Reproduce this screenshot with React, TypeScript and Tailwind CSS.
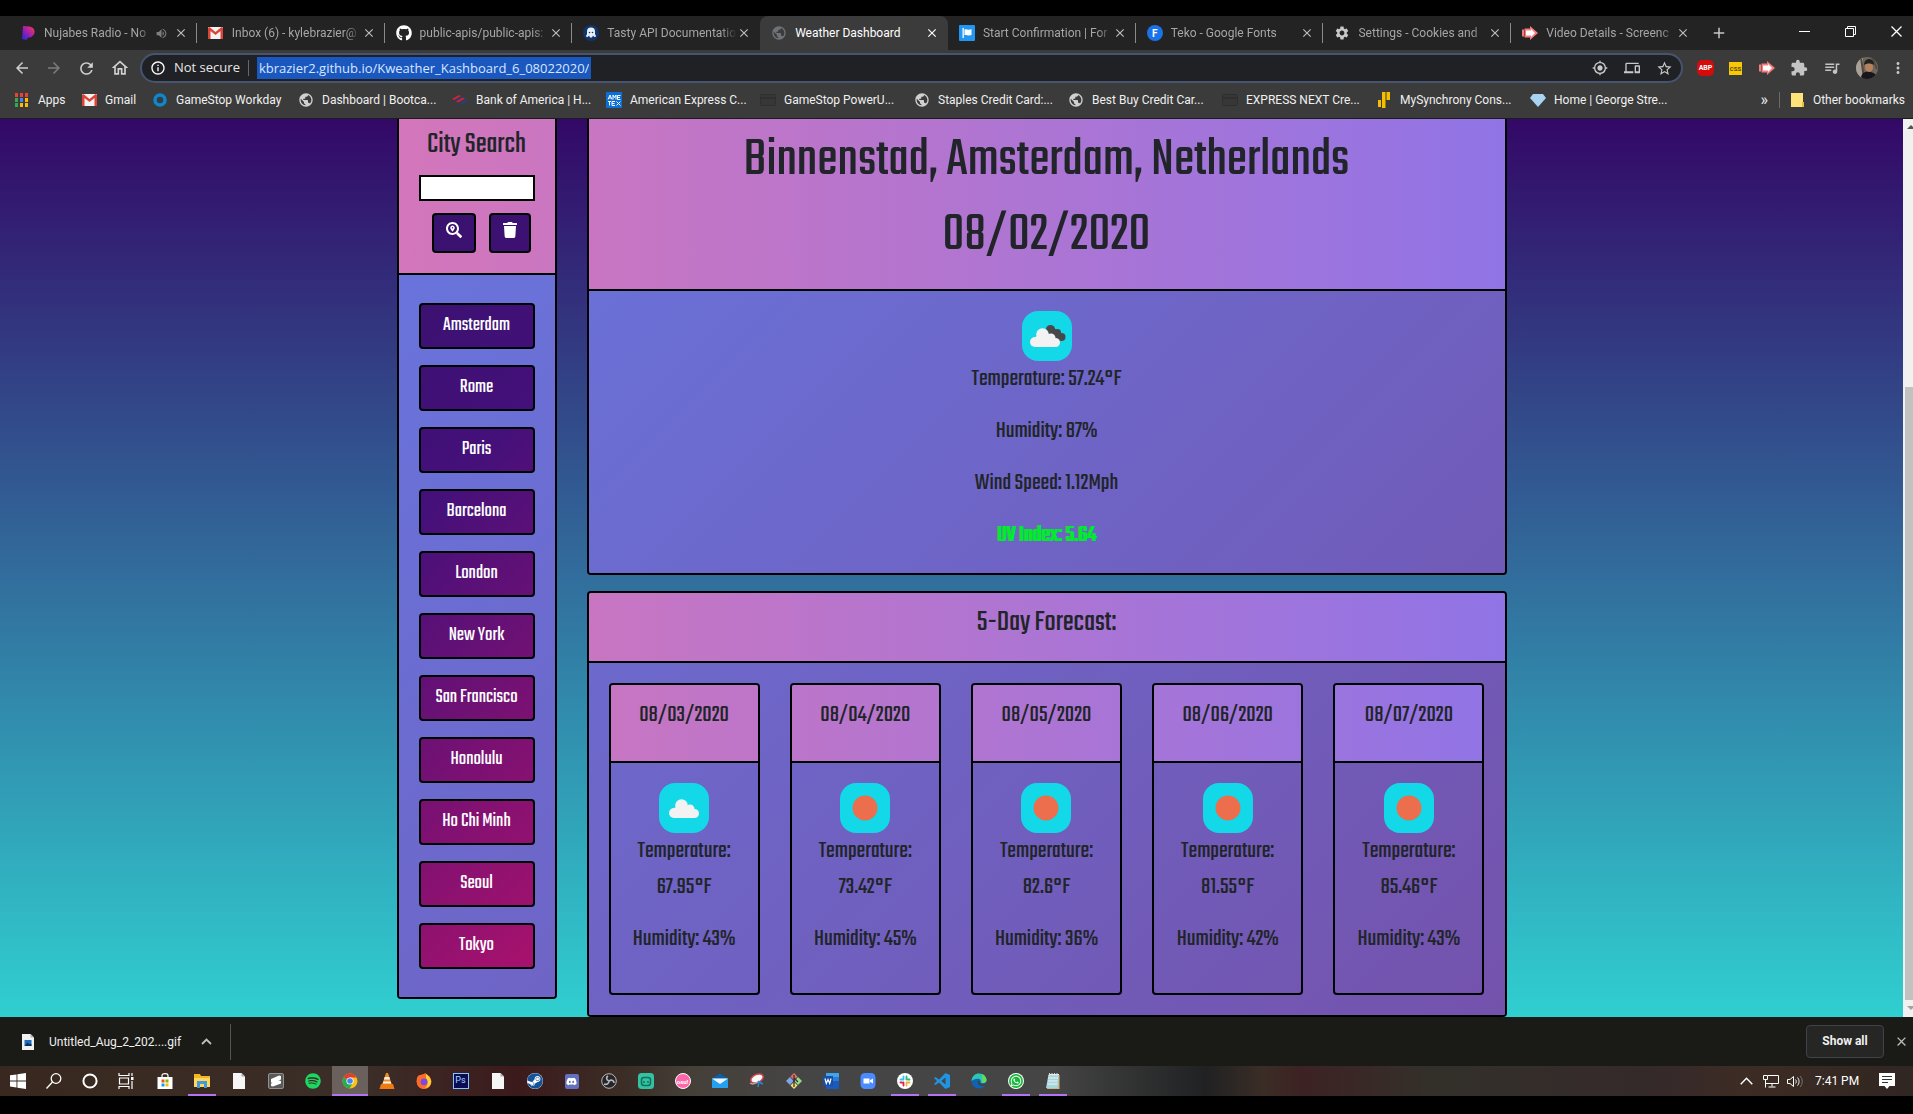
import type { ReactNode } from 'react';
import { FaGithub, FaSearchLocation, FaTrash, FaSpotify, FaSteam, FaDiscord, FaWhatsapp } from 'react-icons/fa';
import {
  MdArrowBack,
  MdArrowForward,
  MdRefresh,
  MdOutlineHome,
  MdInfoOutline,
  MdMyLocation,
  MdDevices,
  MdStarBorder,
  MdExtension,
  MdQueueMusic,
  MdMoreVert,
  MdPublic,
  MdSettings,
  MdClose,
  MdAdd,
  MdVolumeUp,
} from 'react-icons/md';

const UI = 'font-["Segoe_UI","Roboto","Open_Sans",sans-serif]';
const ADDRESS = 'font-["Segoe_UI","Open_Sans",sans-serif]';
const TEKO = 'font-["Teko","Roboto_Condensed","Liberation_Sans",sans-serif]';

/* Gradients that stay fixed to the viewport, so that every panel shows its own part of one backdrop. */
const HEAD_BG =
  'bg-[linear-gradient(90deg,#ec77ab,#7873f5)] bg-fixed bg-[position:0_119px] bg-[length:calc(100%-10px)_898px]';
const BODY_BG =
  'bg-[linear-gradient(135deg,#667eea,#764ba2)] bg-fixed bg-[position:0_119px] bg-[length:calc(100%-10px)_898px]';
const BUTTON_BG =
  'bg-[linear-gradient(135deg,#231557_0%,#44107a_29%,#ff1361_67%,#fff800_100%)] bg-fixed bg-[position:0_119px] bg-[length:calc(100%-10px)_898px]';

/* ---------- favicons ---------- */

const Pandora = () => (
  <svg width="14" height="16" viewBox="0 0 14 16">
    <defs>
      <linearGradient id="pan" x1="0" y1="1" x2="1" y2="0">
        <stop offset="0" stopColor="#1a2bd8" />
        <stop offset=".5" stopColor="#a31fb0" />
        <stop offset="1" stopColor="#ff3a4e" />
      </linearGradient>
    </defs>
    <path d="M2 1l6 .5c4 .5 6 3 5.500 6S10 13 7 12.500L5.500 15 1 14z" fill="url(#pan)" />
  </svg>
);

const GmailIcon = () => (
  <svg width="15" height="12" viewBox="0 0 15 12">
    <rect width="15" height="12" rx="1" fill="#f2f2f2" />
    <path d="M0 1v11h2.500V4l5 4 5-4v8H15V1L13.500 0l-6 5-6-5z" fill="#db4437" />
  </svg>
);

const Octo = () => (
  <svg width="16" height="16" viewBox="0 0 16 16">
    <circle cx="8" cy="8" r="8" fill="#12346b" />
    <path d="M4 9V6.500a4 4 0 0 1 8 0V9l1.200 2.500-2 .5-1.200-1.500L9 12.500H7L6 10.500 4.800 12l-2-.5z" fill="#e8f0fa" />
    <circle cx="6.500" cy="7.500" r=".8" fill="#12346b" />
    <circle cx="9.500" cy="7.500" r=".8" fill="#12346b" />
  </svg>
);

const FlagIcon = () => (
  <svg width="16" height="16" viewBox="0 0 16 16">
    <rect width="16" height="16" rx="1" fill="#2196f3" />
    <path d="M3.500 3h1.300v10H3.500zM5.500 4.500c2-1 3 1 7-.3V10c-4 1.300-5-.8-7 .2z" fill="#fff" />
  </svg>
);

const TekoIcon = () => (
  <span className="flex size-4 items-center justify-center rounded-full bg-[#1a73e8] text-[10px] font-bold text-white">F</span>
);

const Caster = () => (
  <svg width="16" height="14" viewBox="0 0 16 14">
    <path d="M0 3.500h2v7H0zM2.500 2.500H8V0l8 7-8 7v-2.500H2.500z" fill="#f57c7c" />
    <path d="M4 4.500h5V3l4 4-4 4V9.500H4z" fill="#fff" />
  </svg>
);

const AppsGrid = () => (
  <svg width="14" height="14" viewBox="0 0 14 14">
    {['#ea4335', '#ea4335', '#ea4335', '#34a853', '#4285f4', '#fbbc05', '#34a853', '#fbbc05', '#fbbc05'].map((c, i) => (
      <rect key={i} x={(i % 3) * 5} y={Math.floor(i / 3) * 5} width="3" height="4" fill={c} />
    ))}
  </svg>
);

const Ring = () => (
  <svg width="14" height="14" viewBox="0 0 14 14">
    <circle cx="7" cy="7" r="5" fill="none" stroke="#0f86d0" strokeWidth="3.500" />
  </svg>
);

const Boa = () => (
  <svg width="16" height="10" viewBox="0 0 16 10">
    <path d="M0 4l7-4 2 1-7 4zM4 6.500l7-4 2 1-7 4z" fill="#d4213d" />
    <path d="M2.500 5.500l7-4 1 .6-7 4zM8 8.500l6-4 2 1-6 4z" fill="#24408e" />
  </svg>
);

const Amex = () => (
  <svg width="16" height="16" viewBox="0 0 16 16">
    <rect width="16" height="16" fill="#0a6fd6" />
    <path d="M2 7.500L4 3l2 4.500M3 6h2M7 7.500V3l1.500 2.500L10 3v4.500M14.500 3.500h-3v4h3M11.500 5.500h2.500M2 9.500h3M3.500 9.500v4M6 13.500v-4h3M6 11.500h2.500M6 13.500h3M10.500 9.500l4 4M14.500 9.500l-4 4" fill="none" stroke="#fff" />
  </svg>
);

const DarkCard = () => (
  <svg width="16" height="12" viewBox="0 0 16 12">
    <rect x=".5" y=".5" width="15" height="11" rx="1" fill="#373737" stroke="#2f2f2f" />
    <rect y="3" width="16" height="2" fill="#2f2f2f" />
  </svg>
);

const Bars = () => (
  <svg width="12" height="16" viewBox="0 0 12 16">
    <path d="M0 8h3v7H0zM4 0h3.500v16H4zM8.500 0H12v8H8.500z" fill="#f5bf00" />
  </svg>
);

const Diamond = () => (
  <svg width="16" height="13" viewBox="0 0 16 13">
    <path d="M3 0h10l3 4-8 9-8-9z" fill="#a9d3f3" />
  </svg>
);

/* ---------- browser frame ---------- */

type Tab = { title: string; icon: ReactNode; active?: boolean; sound?: boolean; line?: boolean };

const TABS: Tab[] = [
  { title: 'Nujabes Radio - No', icon: <Pandora />, sound: true, line: true },
  { title: 'Inbox (6) - kylebrazier@', icon: <GmailIcon />, line: true },
  { title: 'public-apis/public-apis:', icon: <FaGithub size={16} color="#fff" />, line: true },
  { title: 'Tasty API Documentatio', icon: <Octo /> },
  { title: 'Weather Dashboard', icon: <MdPublic size={16} color="#6f7377" />, active: true },
  { title: 'Start Confirmation | For', icon: <FlagIcon />, line: true },
  { title: 'Teko - Google Fonts', icon: <TekoIcon />, line: true },
  { title: 'Settings - Cookies and', icon: <MdSettings size={16} color="#c8c8c8" />, line: true },
  { title: 'Video Details - Screenc', icon: <Caster /> },
];

const TabStrip = () => (
  <div className="flex h-[34px] items-stretch bg-[#232323] pl-[9px]">
    <div className="flex min-w-0 flex-1" role="tablist">
      {TABS.map((t) => (
        <div
          key={t.title}
          className={`flex min-w-0 flex-1 items-center pl-[11px] ${t.active ? 'rounded-t-lg bg-[#3b3b3b]' : ''}`}
        >
          <span className="flex w-4 shrink-0 justify-center">{t.icon}</span>
          <button
            role="tab"
            aria-selected={!!t.active}
            className={`ml-2 min-w-0 flex-1 overflow-hidden text-left text-[12px] whitespace-nowrap ${t.active ? 'text-white' : 'text-[#a6a6a6] [mask-image:linear-gradient(90deg,#000_calc(100%-16px),transparent)]'}`}
          >
            {t.title}
          </button>
          {t.sound && <MdVolumeUp size={13} color="#808080" className="mr-[6px] ml-[2px] shrink-0" />}
          <button aria-label="Close tab" className="mr-2 shrink-0">
            <MdClose size={14} color={t.active ? '#fff' : '#bdbdbd'} />
          </button>
          <span className={`h-5 w-px shrink-0 ${t.line ? 'bg-[#8a8a8a]' : ''}`} />
        </div>
      ))}
    </div>
    <div className="flex w-[214px] shrink-0 items-center">
      <button aria-label="New tab" className="ml-[11px]">
        <MdAdd size={18} color="#c8c8c8" />
      </button>
      <div className="ml-auto flex items-center gap-[35px] pr-[11px] pb-1">
        <button aria-label="Minimize" className="h-px w-[11px] bg-white" />
        <button aria-label="Restore">
          <svg width="11" height="11" viewBox="0 0 11 11" fill="none" stroke="#fff">
            <path d="M.5 2.500h8v8h-8zM2.500 2.500v-2h8v8h-2" />
          </svg>
        </button>
        <button aria-label="Close">
          <svg width="11" height="11" viewBox="0 0 11 11" stroke="#fff" strokeWidth="1.300">
            <path d="M.5.500l10 10M10.500.500l-10 10" />
          </svg>
        </button>
      </div>
    </div>
  </div>
);

const Avatar = () => (
  <svg width="22" height="22" viewBox="0 0 22 22">
    <clipPath id="av">
      <circle cx="11" cy="11" r="11" />
    </clipPath>
    <g clipPath="url(#av)">
      <rect width="22" height="22" fill="#6f665b" />
      <rect width="7" height="22" fill="#a9a096" />
      <path d="M5 0l3 22M16 0l5 12" stroke="#514a42" strokeWidth="2" />
      <ellipse cx="13" cy="10" rx="4" ry="5" fill="#b5825e" />
      <path d="M8 8c0-8 10-8 10 0-3-2-7-2-10 0z" fill="#222" />
      <path d="M5 22c0-6 4-8 8-7 5 0 7 2 9 7z" fill="#16161c" />
    </g>
  </svg>
);

const Toolbar = () => (
  <div className="flex h-[36px] items-center bg-[#3b3b3b] pl-[13px]">
    <div className="flex w-[127px] shrink-0 items-center gap-[14px]">
      <button aria-label="Back"><MdArrowBack size={18} color="#d0d0d0" /></button>
      <button aria-label="Forward"><MdArrowForward size={18} color="#7c7c7c" /></button>
      <button aria-label="Reload"><MdRefresh size={19} color="#d0d0d0" /></button>
      <button aria-label="Home"><MdOutlineHome size={20} color="#d0d0d0" /></button>
    </div>
    <div className={`flex h-[30px] min-w-0 flex-1 items-center rounded-full border-2 border-[#47546f] bg-[#202124] pr-2 pl-2 text-[13px] ${ADDRESS}`}>
      <MdInfoOutline size={16} color="#fff" className="shrink-0" />
      <span className="ml-2 whitespace-nowrap text-[#e8e8e8]">Not secure</span>
      <span className="mx-2 h-4 w-px shrink-0 bg-[#66686c]" />
      <input
        aria-label="Address"
        defaultValue="kbrazier2.github.io/Kweather_Kashboard_6_08022020/"
        className="h-[22px] field-sizing-content bg-[#1a58c0] px-[2px] text-[#d8e6ff] outline-none"
      />
      <div className="ml-auto flex gap-4">
        <button aria-label="Location"><MdMyLocation size={16} color="#c8c8c8" /></button>
        <button aria-label="Send to device"><MdDevices size={16} color="#c8c8c8" /></button>
        <button aria-label="Bookmark"><MdStarBorder size={17} color="#c8c8c8" /></button>
      </div>
    </div>
    <div className="flex shrink-0 items-center gap-[15px] pr-[6px] pl-[14px]">
      <button aria-label="Adblock" className="flex h-4 w-[17px] items-center justify-center rounded-[5px] bg-[#d40b0b] text-[7px] font-bold text-white">ABP</button>
      <button aria-label="CSS viewer" className="flex h-[13px] w-[13px] items-center justify-center bg-[#f7c708] text-[6px] font-bold text-[#574600]">CSS</button>
      <button aria-label="Screencastify" className="ml-[2px]"><Caster /></button>
      <button aria-label="Extensions"><MdExtension size={18} color="#c4c4c4" /></button>
      <button aria-label="Media"><MdQueueMusic size={18} color="#c4c4c4" /></button>
      <button aria-label="Profile"><Avatar /></button>
      <button aria-label="Menu" className="-ml-1"><MdMoreVert size={18} color="#c4c4c4" /></button>
    </div>
  </div>
);

const Globe = () => <MdPublic size={16} color="#d0d0d0" />;

const BOOKMARKS: { label: string; icon: ReactNode; width: string }[] = [
  { label: 'Apps', icon: <AppsGrid />, width: 'w-[67px]' },
  { label: 'Gmail', icon: <GmailIcon />, width: 'w-[71px]' },
  { label: 'GameStop Workday', icon: <Ring />, width: 'w-[146px]' },
  { label: 'Dashboard | Bootca...', icon: <Globe />, width: 'w-[154px]' },
  { label: 'Bank of America | H...', icon: <Boa />, width: 'w-[154px]' },
  { label: 'American Express C...', icon: <Amex />, width: 'w-[154px]' },
  { label: 'GameStop PowerU...', icon: <DarkCard />, width: 'w-[154px]' },
  { label: 'Staples Credit Card:...', icon: <Globe />, width: 'w-[154px]' },
  { label: 'Best Buy Credit Car...', icon: <Globe />, width: 'w-[154px]' },
  { label: 'EXPRESS NEXT Cre...', icon: <DarkCard />, width: 'w-[154px]' },
  { label: 'MySynchrony Cons...', icon: <Bars />, width: 'w-[154px]' },
  { label: 'Home | George Stre...', icon: <Diamond />, width: 'w-[154px]' },
];

const Bookmarks = () => (
  <nav className="flex h-[33px] items-center border-b border-[#1c1c1c] bg-[#3b3b3b] pr-2 pb-1 pl-[14px] text-[12px] whitespace-nowrap text-[#f0f0f0]">
    {BOOKMARKS.map((b) => (
      <a key={b.label} href="#" className={`flex shrink-0 items-center ${b.width}`}>
        <span className="flex w-4 shrink-0 justify-center">{b.icon}</span>
        <span className="ml-2">{b.label}</span>
      </a>
    ))}
    <div className="ml-auto flex items-center">
      <button aria-label="More bookmarks" className="text-[16px]">»</button>
      <span className="mx-[11px] h-4 w-px bg-[#6a6a6a]" />
      <a href="#" className="flex items-center gap-[9px]">
        <svg width="13" height="14" viewBox="0 0 13 14">
          <path d="M0 0h12v11l1 3H0z" fill="#ffe27a" />
          <path d="M11 9h2v5h-2z" fill="#e8bd3a" />
        </svg>
        Other bookmarks
      </a>
    </div>
  </nav>
);

/* ---------- weather page ---------- */

const CITIES = ['Amsterdam', 'Rome', 'Paris', 'Barcelona', 'London', 'New York', 'San Francisco', 'Honolulu', 'Ho Chi Minh', 'Seoul', 'Tokyo'];

const Cloud = () => (
  <g fill="#f2f2f2">
    <circle cx="15" cy="30" r="5" />
    <circle cx="22.500" cy="22.500" r="6.300" />
    <circle cx="31" cy="26" r="4.500" />
    <circle cx="35.500" cy="30.500" r="4.500" />
    <path d="M15 25l7-3 13.500 5v8H15z" />
  </g>
);

const WeatherIcon = ({ kind }: { kind: 'broken' | 'cloud' | 'sun' }) => (
  <svg width="50" height="50" viewBox="0 0 50 50" role="img" aria-label={kind} className="mx-auto rounded-2xl bg-[#12d8e8]">
    {kind === 'sun' && <circle cx="25" cy="25" r="12.500" fill="#ec6e4c" />}
    {kind === 'cloud' && <Cloud />}
    {kind === 'broken' && (
      <>
        <g fill="#48484a">
          <circle cx="28.500" cy="18.500" r="4.500" />
          <circle cx="35.500" cy="21.500" r="3.500" />
          <circle cx="39.500" cy="26" r="4" />
          <path d="M25 20l5-5 9 8-1 7-6-2z" />
        </g>
        <g transform="translate(-2 1)">
          <Cloud />
        </g>
      </>
    )}
  </svg>
);

const Sidebar = () => (
  <aside className="w-40 shrink-0 self-start overflow-hidden rounded-b border-2 border-t-0 border-black">
    <div className={`flex flex-col items-center border-b-2 border-black px-5 pb-5 ${HEAD_BG}`}>
      <label htmlFor="city" className="pt-[5px] text-[30px] leading-[42px] whitespace-nowrap">City Search</label>
      <input id="city" className="mt-[9px] h-[26px] w-full border-2 border-black bg-white px-1 text-base outline-none" />
      <div className="mt-3 flex gap-[13px] pl-[9px]">
        <button aria-label="Search" className={`flex h-10 w-11 items-center justify-center rounded border-2 border-black pb-[6px] text-white ${BUTTON_BG}`}>
          <FaSearchLocation size={16} />
        </button>
        <button aria-label="Clear" className={`flex h-10 w-[42px] items-center justify-center rounded border-2 border-black pb-[6px] text-white ${BUTTON_BG}`}>
          <FaTrash size={16} />
        </button>
      </div>
    </div>
    <div className={`flex flex-col gap-4 px-5 py-7 ${BODY_BG}`}>
      {CITIES.map((c) => (
        <button key={c} className={`h-[46px] rounded border-2 border-black text-[20px] leading-9 font-normal whitespace-nowrap text-white ${BUTTON_BG}`}>
          {c}
        </button>
      ))}
    </div>
  </aside>
);

const FORECAST: { date: string; kind: 'cloud' | 'sun'; temp: string; humidity: string }[] = [
  { date: '08/03/2020', kind: 'cloud', temp: '67.95°F', humidity: '43%' },
  { date: '08/04/2020', kind: 'sun', temp: '73.42°F', humidity: '45%' },
  { date: '08/05/2020', kind: 'sun', temp: '82.6°F', humidity: '36%' },
  { date: '08/06/2020', kind: 'sun', temp: '81.55°F', humidity: '42%' },
  { date: '08/07/2020', kind: 'sun', temp: '85.46°F', humidity: '43%' },
];

const Today = () => (
  <section className="overflow-hidden rounded-b border-2 border-t-0 border-black">
    <h1 className={`border-b-2 border-black pt-1 pb-4 text-[56px] leading-[75px] ${HEAD_BG}`}>
      Binnenstad, Amsterdam, Netherlands
      <br />
      08/02/2020
    </h1>
    <div className={`flex flex-col gap-4 p-5 ${BODY_BG}`}>
      <div>
        <WeatherIcon kind="broken" />
        <p>Temperature: 57.24°F</p>
      </div>
      <p>Humidity: 87%</p>
      <p>Wind Speed: 1.12Mph</p>
      <p className="text-[#00ec2c] [text-shadow:1px_0_#00ec2c,-1px_0_#00ec2c99]">UV Index: 5.64</p>
    </div>
  </section>
);

const FiveDay = () => (
  <section className="mt-4 overflow-hidden rounded border-2 border-black">
    <h2 className={`h-[70px] border-b-2 border-black pt-3 text-[30px] ${HEAD_BG}`}>5-Day Forecast:</h2>
    <div className={`grid grid-cols-5 gap-[30px] p-5 ${BODY_BG}`}>
      {FORECAST.map((f) => (
        <article key={f.date} className="overflow-hidden rounded border-2 border-black">
          <h3 className={`h-[78px] border-b-2 border-black pt-3 ${HEAD_BG}`}>{f.date}</h3>
          <div className="px-5 pt-5 pb-9">
            <WeatherIcon kind={f.kind} />
            <p>
              Temperature:
              <br />
              {f.temp}
            </p>
            <p className="mt-4 whitespace-nowrap">Humidity: {f.humidity}</p>
          </div>
        </article>
      ))}
    </div>
  </section>
);

const WeatherPage = () => (
  <div className="flex bg-[linear-gradient(180deg,#330867,#30cfd0)]">
    <main className={`flex min-w-0 flex-1 justify-center text-center text-[24px] leading-9 font-normal text-[#212529] ${TEKO}`}>
      <div className="flex w-full max-w-[1110px] gap-[30px]">
        <Sidebar />
        <div className="min-w-0 flex-1">
          <Today />
          <FiveDay />
        </div>
      </div>
    </main>
    <div className="flex w-[10px] shrink-0 flex-col items-end bg-[#f1f1f1]">
      <svg width="8" height="17" viewBox="0 0 8 17"><path d="M2 10l4-4 4 4z" fill="#555" /></svg>
      <span className="mt-[251px] w-2 flex-1 bg-[#c1c1c1]" />
      <svg width="8" height="17" viewBox="0 0 8 17"><path d="M2 6l4 4 4-4z" fill="#a3a3a3" /></svg>
    </div>
  </div>
);

/* ---------- download shelf and taskbar ---------- */

const Downloads = () => (
  <div className="flex h-[49px] items-center bg-[#1a1a16] text-[12px] text-[#f0f0f0]">
    <button className="flex items-center pl-[22px]">
      <svg width="12" height="16" viewBox="0 0 12 16">
        <path d="M0 0h8.500L12 3.500V16H0z" fill="#f2f2f2" />
        <path d="M8.500 0v3.500H12z" fill="#b5b5b5" />
        <path d="M2.500 6h7v6h-7z" fill="#1c6fc0" />
        <path d="M2.500 12l3-3.500 2 2 1-1 1 1V12z" fill="#0b2f5c" />
      </svg>
      <span className="ml-[15px] w-[130px] text-left whitespace-nowrap">Untitled_Aug_2_202....gif</span>
    </button>
    <button aria-label="Download options" className="ml-[22px]">
      <svg width="11" height="7" viewBox="0 0 11 7" fill="none" stroke="#c0c0c0" strokeWidth="1.800"><path d="M1 6l4.500-4.500L10 6" /></svg>
    </button>
    <span className="ml-[18px] h-9 w-px bg-[#55554f]" />
    <button className="ml-auto h-[33px] w-[78px] rounded border border-[#42424a] bg-[#262624] pb-px font-bold">Show all</button>
    <button aria-label="Close downloads" className="mr-1 ml-[10px]"><MdClose size={15} color="#bdbdbd" /></button>
  </div>
);

const S = ({ children }: { children: ReactNode }) => (
  <svg width="16" height="16" viewBox="0 0 16 16">{children}</svg>
);

const FileIcon = () => (
  <S>
    <path d="M2 0h8.500L14 3.500V16H2z" fill="#f6f6f6" />
    <path d="M10.500 0v3.500H14z" fill="#aaa" />
  </S>
);

const SYSTEM: { name: string; icon: ReactNode }[] = [
  { name: 'Start', icon: <S><path d="M0 2.300l6.500-.9v6H0zM7.400 1.300L16 0v7.400H7.400zM0 8.500h6.500v6L0 13.600zM7.400 8.500H16V16l-8.600-1.300z" fill="#fff" /></S> },
  { name: 'Search', icon: <S><g fill="none" stroke="#fff" strokeWidth="1.300"><circle cx="10" cy="5.500" r="4.800" /><path d="M6.500 9L.5 15.500" /></g></S> },
  { name: 'Cortana', icon: <S><circle cx="8" cy="8" r="6.600" fill="none" stroke="#fff" strokeWidth="2" /></S> },
  { name: 'Task view', icon: <S><path d="M1 0v2.500h10V0M1 16v-2.500h10V16M1.500 5h9v6h-9zM14 0v3M14 8v8" fill="none" stroke="#fff" strokeWidth="1.200" /><path d="M13 4h2.500v3H13z" fill="#fff" /></S> },
];

const APPS: { name: string; icon: ReactNode; open?: boolean; focused?: boolean }[] = [
  { name: 'Store', icon: <S><path d="M.5 4h15v12H.5z" fill="#fff" /><path d="M5 4V2.500C5 0 11 0 11 2.500V4" fill="none" stroke="#fff" strokeWidth="1.200" /><path d="M4.500 6.500h3v3h-3z" fill="#f25022" /><path d="M8.500 6.500h3v3h-3z" fill="#7fba00" /><path d="M4.500 10.500h3v3h-3z" fill="#00a4ef" /><path d="M8.500 10.500h3v3h-3z" fill="#ffb900" /></S> },
  { name: 'Explorer', open: true, icon: <S><path d="M0 1h6l1 2h9v11H0z" fill="#f5b520" /><path d="M0 5h16v9H0z" fill="#ffd75e" /><path d="M3 8h10v7h-3v-4H6v4H3z" fill="#3f9bdc" /></S> },
  { name: 'Document', icon: <FileIcon /> },
  { name: 'Sublime', icon: <S><rect x=".5" y=".5" width="15" height="15" rx="1.500" fill="#5a5a5a" stroke="#909090" /><path d="M3 6l8-3.500 2 .5v3.500L5 10l-2-.5zM3 10.500l8-3 2 .5v2.500L5 13.500 3 13z" fill="#fff" /></S> },
  { name: 'Spotify', icon: <FaSpotify size={16} color="#1ed760" /> },
  { name: 'Chrome', open: true, focused: true, icon: <S><circle cx="8" cy="8" r="7.500" fill="#fbc116" /><path d="M8 8L1.500 4.200A7.500 7.500 0 0 1 14.500 4.500H8z" fill="#e33b2e" /><path d="M8 8L1.500 4.200A7.500 7.500 0 0 0 7.500 15.500L11 9.800z" fill="#2da94f" /><circle cx="8" cy="8" r="3.600" fill="#fff" /><circle cx="8" cy="8" r="2.800" fill="#4285f4" /></S> },
  { name: 'VLC', icon: <S><path d="M7 0h2l4 12H3z" fill="#f58a1f" /><path d="M5.700 4h4.600l.8 2.500H4.900zM4.300 8.500h7.400l.6 2H3.700z" fill="#f3f3f3" /><path d="M2 11h12l1.500 5H.5z" fill="#ef7b10" /></S> },
  { name: 'Firefox', icon: <S><circle cx="8" cy="8.500" r="7.300" fill="#ff9320" /><path d="M3 2c3 1 5-1 6-2 3 2 6 5 6.300 9 0 4-3.300 7-7.300 7C3 16 .7 12 .7 8.500L1 4.500z" fill="#ff6a2b" /><path d="M10 1c4 3 5 6 5 8 0 3-3 6-6 6 4-3 3-8 1-10z" fill="#ffd43a" /><circle cx="8" cy="8.800" r="3.400" fill="#7a4be0" /></S> },
  { name: 'Photoshop', icon: <span className="flex size-4 items-center justify-center border border-[#84c5ff] bg-[#0a0d55] text-[9px] text-[#a8d8ff]">Ps</span> },
  { name: 'Document 2', icon: <FileIcon /> },
  { name: 'Steam', icon: <span className="rounded-full bg-[#fff]"><FaSteam size={16} color="#14539a" /></span> },
  { name: 'Discord', icon: <span className="flex h-[15px] w-[14px] items-center justify-center rounded-[2px] bg-[#6370bd]"><FaDiscord size={11} color="#fff" /></span> },
  { name: 'OBS', icon: <S><circle cx="8" cy="8" r="7.300" fill="#26262a" stroke="#b9b9b9" /><path d="M8 8c-3-1-3-4-1-5M8 8c3-2 5 0 5 2M8 8c0 3-3 4-5 3" fill="none" stroke="#b9b9b9" strokeWidth="1.600" /></S> },
  { name: 'Streamlabs', icon: <S><rect width="16" height="16" rx="3.500" fill="#31c3a2" /><rect x="3.500" y="4.500" width="9" height="8" rx="2.500" fill="none" stroke="#14705c" strokeWidth="1.500" /><path d="M6 8v2M10 8v2" stroke="#14705c" strokeWidth="1.500" /></S> },
  { name: 'osu!', icon: <span className="flex size-4 items-center justify-center rounded-full border border-white bg-[#ff66aa] text-[6px] font-bold text-white">osu!</span> },
  { name: 'Mail', icon: <S><path d="M0 5.500L8 .5l8 5V9H0z" fill="#0f5ea8" /><path d="M0 5.500h16V15H0z" fill="#25a0ee" /><path d="M0 5.500h16L8 11z" fill="#eaf6ff" /></S> },
  { name: 'Snip', icon: <S><ellipse cx="8" cy="5.500" rx="6.500" ry="4" transform="rotate(-25 8 5.500)" fill="#fafafa" stroke="#d64550" strokeWidth="1.500" /><path d="M1 10c4 3 7-1 9-2" fill="none" stroke="#aaa" strokeWidth="1.500" /><path d="M10 8l-1 6M10 9l4 2" stroke="#2389d7" strokeWidth="1.500" /></S> },
  { name: 'Git', icon: <S><path d="M8 0l3.500 3.500L8 7 4.500 3.500z" fill="#ef6a6a" /><path d="M4 4l3.500 4L4 12 0 8z" fill="#7ea6e8" /><path d="M12 4l4 4-4 4-3.500-4z" fill="#9bdc8a" /><path d="M8 9l3.500 3.500L8 16l-3.500-3.500z" fill="#f5df77" /><path d="M8 2v12M8 5l4 4" stroke="#333" strokeWidth="1.300" /></S> },
  { name: 'Word', icon: <S><path d="M3 0h13v4H3z" fill="#41a5ee" /><path d="M3 4h13v4H3z" fill="#2b7cd3" /><path d="M3 8h13v8H3z" fill="#185abd" /><path d="M0 3h10v10H0z" fill="#1a4fa8" /><path d="M2 5.500l1.300 5L5 6.500l1.700 4 1.300-5" fill="none" stroke="#fff" strokeWidth="1.200" /></S> },
  { name: 'Zoom', icon: <S><rect x=".5" width="15" height="16" rx="4.500" fill="#4a8cff" /><path d="M3.500 5.500h6v5h-6zM10 7.300l3-1.800v5l-3-1.800z" fill="#fff" /></S> },
  { name: 'Slack', open: true, icon: <S><circle cx="8" cy="8" r="8" fill="#fff" /><g strokeWidth="1.800" strokeLinecap="round"><path d="M6.500 3.500v3M3.500 6.500h2" stroke="#36c5f0" /><path d="M9.500 3.500v3M11 6.500h1.500" stroke="#2eb67d" /><path d="M9.500 9.500h3M9.500 11v1.500" stroke="#ecb22e" /><path d="M6.500 9.500v3M3.500 9.500h1.500" stroke="#e01e5a" /></g></S> },
  { name: 'VS Code', open: true, icon: <S><path d="M11.500 0L16 2v12l-4.500 2L5 9.500 1.500 12 0 11l3-3-3-3 1.500-1L5 6.500zM11.500 4.500L7.300 8l4.200 3.500z" fill="#1f94e0" fillRule="evenodd" /></S> },
  { name: 'Edge', icon: <S><circle cx="8" cy="8" r="7.500" fill="#0f62b5" /><path d="M.5 8C1 3 4 .5 8 .5c5 0 7.500 3.500 7.500 6.500 0 3-4 4-6 2.500C11 6 6 4 .5 8z" fill="#2fc6b0" /><path d="M11 1c3 1.500 4.500 4 4.500 6s-2 3.500-4 3z" fill="#66d95b" /><path d="M8 8c-1 4 4 5 8 3" fill="none" stroke="#40444a" strokeWidth="2" /></S> },
  { name: 'WhatsApp', open: true, icon: <span className="flex size-4 items-center justify-center rounded-full bg-white"><span className="flex size-[14px] items-center justify-center rounded-full bg-[#18b83c]"><FaWhatsapp size={12} color="#fff" /></span></span> },
  { name: 'Notepad', open: true, icon: <S><path d="M3.500 2h11v14H2z" fill="#c9b98c" /><path d="M3.500 1.500H14L12.500 15H1z" fill="#a9d5dc" /><path d="M4 1.500h10M3 5h10M3 8h9.500M2.500 11h10" stroke="#e7f5f7" /><path d="M4.500 0v3M7 0v3M9.500 0v3M12 0v3" stroke="#ddd" /></S> },
];

const Taskbar = () => (
  <div className="flex h-[30px] items-stretch bg-[linear-gradient(90deg,#38281f_0%,#3b2e28_19%,#3c1a1c_27%,#3b2f27_33%,#453f38_36%,#454545_42%,#454545_55%,#202122_63%,#3a2d26_66%,#3d2223_68%,#33302a_75%,#35292a_87%,#3d2c24_91%,#302622_100%)]">
    {SYSTEM.map((s) => (
      <button key={s.name} aria-label={s.name} className="flex w-9 shrink-0 items-center justify-center">{s.icon}</button>
    ))}
    <div className="ml-[2px] flex">
      {APPS.map((a) => (
        <button key={a.name} aria-label={a.name} className="flex w-[37px] shrink-0 justify-center">
          <span
            className={`flex h-full flex-col items-center justify-center border-b-2 pt-[2px] ${a.focused ? 'w-9 bg-[#6a605c]' : 'w-7'} ${a.open ? 'border-[#b473f2]' : 'border-transparent'}`}
          >
            {a.icon}
          </span>
        </button>
      ))}
    </div>
    <div className="ml-auto flex items-center pr-[18px]">
      <button aria-label="Hidden icons"><svg width="13" height="8" viewBox="0 0 13 8" fill="none" stroke="#fff" strokeWidth="1.400"><path d="M.7 7.300L6.500 1.200l5.800 6.100" /></svg></button>
      <button aria-label="Network" className="ml-[10px]"><svg width="16" height="14" viewBox="0 0 16 14" fill="none" stroke="#fff"><path d="M5 1.500h10.500v8H3M.5 1.500h4v4h-4zM2.500 5.500v8M9 9.500v3M5.500 13h7" /></svg></button>
      <button aria-label="Volume" className="ml-2"><svg width="16" height="13" viewBox="0 0 16 13" fill="none" stroke="#fff"><path d="M.5 4.500h2.500l3.500-3v10l-3.500-3H.5zM8.500 4.500c1 1 1 3 0 4M10.500 2.500c2 2 2 6 0 8" /><path d="M13 1c3 3 3 8 0 11" stroke="#777" /></svg></button>
      <span className="ml-3 w-[44px] text-[12px] whitespace-nowrap text-white">7:41 PM</span>
      <button aria-label="Notifications" className="ml-[20px]"><svg width="16" height="16" viewBox="0 0 16 16"><path d="M0 0h16v13h-5.500L8 16l-2.500-3H0z" fill="#fff" /><path d="M3 3.500h10M3 6.500h10M3 9.500h6" stroke="#333" strokeWidth="1.200" /></svg></button>
    </div>
  </div>
);

export default function App() {
  return (
    <div className={`flex min-h-screen flex-col bg-black pt-4 ${UI}`}>
      <TabStrip />
      <Toolbar />
      <Bookmarks />
      <WeatherPage />
      <Downloads />
      <Taskbar />
    </div>
  );
}
